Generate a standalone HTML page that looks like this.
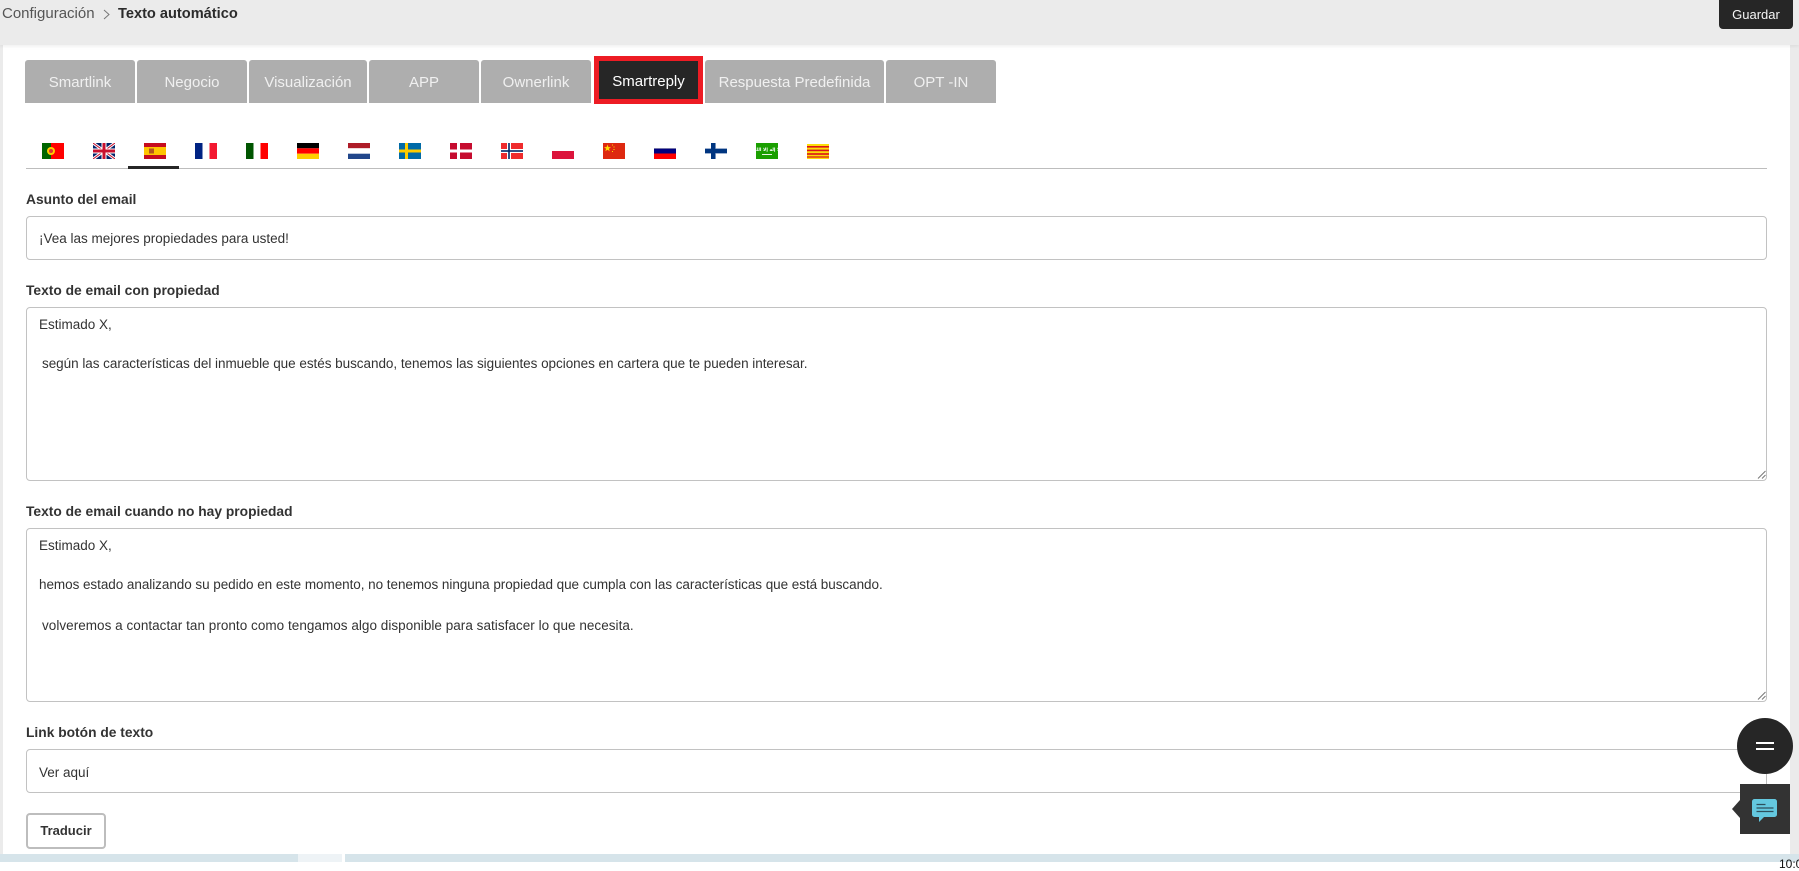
<!DOCTYPE html>
<html lang="es"><head><meta charset="utf-8"><title>Texto automático</title>
<style>
html,body{margin:0;padding:0;width:1799px;height:862px;overflow:hidden;background:#fff;font-family:"Liberation Sans",sans-serif;color:#333}
.a{position:absolute}
.t{position:absolute;white-space:pre;line-height:20px;height:20px;font-size:13.5px;color:#333}
.l{font-weight:bold;font-size:13.8px;color:#333}
.tab{position:absolute;top:60px;height:43px;line-height:46px;background:#aeaeae;color:#f0f0f0;text-align:center;font-size:15px;border-radius:3px 3px 0 0}
.box{position:absolute;left:26px;width:1739px;border:1px solid #c2c2c2;border-radius:4px;background:#fff}
svg.f{position:absolute;top:143px;width:22px;height:16px}
</style></head><body>
<div class="a" style="left:0;top:45px;width:3px;height:809px;background:#ebebeb"></div>
<div class="a" style="left:1790px;top:45px;width:9px;height:809px;background:#ebebeb"></div>
<div class="a" style="left:0;top:0;width:1799px;height:45px;background:#ebebeb;box-shadow:0 1px 4px rgba(0,0,0,.08)"></div>
<div class="t" style="left:2px;top:4px;font-size:15px;color:#555">Configuración</div>
<svg class="a" style="left:102px;top:9px" width="9" height="11" viewBox="0 0 9 11"><path d="M2 1l5 4.5L2 10" fill="none" stroke="#777" stroke-width="1"/></svg>
<div class="t" style="left:118px;top:4px;font-size:14.600px;font-weight:bold;color:#2b2b2b">Texto automático</div>
<div class="a" style="left:1719px;top:0;width:74px;height:29px;line-height:30px;background:#262626;border-radius:0 0 4px 4px;color:#f5f5f5;text-align:center;font-size:13px">Guardar</div>

<div class="tab" style="left:25px;width:110px">Smartlink</div>
<div class="tab" style="left:137px;width:110px">Negocio</div>
<div class="tab" style="left:249px;width:118px">Visualización</div>
<div class="tab" style="left:369px;width:110px">APP</div>
<div class="tab" style="left:481px;width:110px">Ownerlink</div>
<div class="tab" style="left:594px;top:56px;width:99px;height:38px;line-height:42px;border:5px solid #ed1c24;background:#262626;color:#fff;border-radius:0">Smartreply</div>
<div class="tab" style="left:705px;width:179px">Respuesta Predefinida</div>
<div class="tab" style="left:886px;width:110px">OPT -IN</div>

<svg class="f" style="left:42px" viewBox="0 0 22 16"><rect width="22" height="16" fill="#f00"/><rect width="9" height="16" fill="#060"/><circle cx="9" cy="8" r="4" fill="#fc0"/><circle cx="9" cy="8" r="2" fill="#d33"/></svg>
<svg class="f" style="left:93px" viewBox="0 0 22 16"><rect width="22" height="16" fill="#012169"/><path d="M0 0l22 16M22 0L0 16" stroke="#fff" stroke-width="3"/><path d="M0 0l22 16M22 0L0 16" stroke="#c8102e" stroke-width="1"/><path d="M11 0v16M0 8h22" stroke="#fff" stroke-width="5"/><path d="M11 0v16M0 8h22" stroke="#c8102e" stroke-width="3"/></svg>
<svg class="f" style="left:144px" viewBox="0 0 22 16"><rect width="22" height="16" fill="#c60b1e"/><rect y="4" width="22" height="8" fill="#ffc400"/><rect x="5" y="5.500" width="5" height="5" fill="#b5541c"/></svg>
<svg class="f" style="left:195px" viewBox="0 0 22 16"><rect width="22" height="16" fill="#fff"/><rect width="7.500" height="16" fill="#002383"/><rect x="14.500" width="7.500" height="16" fill="#f31830"/></svg>
<svg class="f" style="left:246px" viewBox="0 0 22 16"><rect width="22" height="16" fill="#fff"/><rect width="7.500" height="16" fill="#050"/><rect x="14.500" width="7.500" height="16" fill="#f00"/></svg>
<svg class="f" style="left:297px" viewBox="0 0 22 16"><rect width="22" height="5.300" fill="#000"/><rect y="5.300" width="22" height="5.400" fill="#f00"/><rect y="10.700" width="22" height="5.300" fill="#ffce00"/></svg>
<svg class="f" style="left:348px" viewBox="0 0 22 16"><rect width="22" height="5.300" fill="#ae1c28"/><rect y="5.300" width="22" height="5.400" fill="#fff"/><rect y="10.700" width="22" height="5.300" fill="#21468b"/></svg>
<svg class="f" style="left:399px" viewBox="0 0 22 16"><rect width="22" height="16" fill="#006aa7"/><rect x="6" width="3" height="16" fill="#fecc00"/><rect y="6.500" width="22" height="3" fill="#fecc00"/></svg>
<svg class="f" style="left:450px" viewBox="0 0 22 16"><rect width="22" height="16" fill="#c60c30"/><rect x="7" width="3" height="16" fill="#fff"/><rect y="6.500" width="22" height="3" fill="#fff"/></svg>
<svg class="f" style="left:501px" viewBox="0 0 22 16"><rect width="22" height="16" fill="#ef2b2d"/><rect x="6" width="4" height="16" fill="#fff"/><rect y="6" width="22" height="4" fill="#fff"/><rect x="7.200" width="1.600" height="16" fill="#002868"/><rect y="7.200" width="22" height="1.600" fill="#002868"/></svg>
<svg class="f" style="left:552px" viewBox="0 0 22 16"><rect y="8" width="22" height="8" fill="#dc143c"/></svg>
<svg class="f" style="left:603px" viewBox="0 0 22 16"><rect width="22" height="16" fill="#de2910"/><path d="M4.500 1.500l.9 2.600 2.600 0-2.100 1.600.8 2.600-2.200-1.600-2.200 1.600.8-2.600L1 4.100l2.600 0z" fill="#ffde00"/><g fill="#ffde00"><rect x="9" y="1.500" width="1" height="1"/><rect x="10.500" y="3.500" width="1" height="1"/><rect x="10.500" y="6" width="1" height="1"/><rect x="9" y="8" width="1" height="1"/></g></svg>
<svg class="f" style="left:654px" viewBox="0 0 22 16"><rect y="5" width="22" height="6" fill="#00007e"/><rect y="10.500" width="22" height="5.500" fill="#f00"/><rect y="5" width="22" height="1" fill="#7777aa"/></svg>
<svg class="f" style="left:705px" viewBox="0 0 22 16"><rect y="5" width="22" height="6" fill="#c5d0e3"/><rect x="6" width="5" height="16" fill="#c5d0e3"/><rect x="6" width="4.400" height="16" fill="#003580"/><rect y="5.800" width="22" height="4.400" fill="#003580"/></svg>
<svg class="f" style="left:756px" viewBox="0 0 22 16"><rect width="22" height="16" fill="#1a9f00"/><text x="11" y="8" text-anchor="middle" font-size="4.500" font-weight="bold" fill="#fff" font-family="DejaVu Sans,sans-serif">لا إله إلا الله</text><rect x="6" y="11" width="10" height="1" fill="#e8f5e0"/></svg>
<svg class="f" style="left:807px" viewBox="0 0 22 16"><rect y="1" width="22" height="15" fill="#fcdd09"/><rect y="3" width="22" height="1.600" fill="#da121a"/><rect y="6.600" width="22" height="1.600" fill="#da121a"/><rect y="10.200" width="22" height="1.600" fill="#da121a"/><rect y="13.400" width="22" height="1.200" fill="#da121a"/></svg>

<div class="a" style="left:26px;top:168px;width:1741px;height:1px;background:#bdbdbd"></div>
<div class="a" style="left:128px;top:166px;width:51px;height:3px;background:#262626"></div>

<div class="t l" style="left:26px;top:190px">Asunto del email</div>
<div class="box" style="top:216px;height:42px"></div>
<div class="t" style="left:39px;top:229px">¡Vea las mejores propiedades para usted!</div>

<div class="t l" style="left:26px;top:281px">Texto de email con propiedad</div>
<div class="box" style="top:307px;height:172px"></div>
<div class="t" style="left:39px;top:315px">Estimado X,</div>
<div class="t" style="left:42px;top:354px;letter-spacing:-.036px">según las características del inmueble que estés buscando, tenemos las siguientes opciones en cartera que te pueden interesar.</div>
<svg class="a" style="left:1757px;top:470px" width="9" height="9" viewBox="0 0 9 9"><path d="M8.500 1L1 8.500M8.500 5L5 8.500" stroke="#777" fill="none"/></svg>

<div class="t l" style="left:26px;top:502px">Texto de email cuando no hay propiedad</div>
<div class="box" style="top:528px;height:172px"></div>
<div class="t" style="left:39px;top:536px">Estimado X,</div>
<div class="t" style="left:39px;top:575px;letter-spacing:-.05px">hemos estado analizando su pedido en este momento, no tenemos ninguna propiedad que cumpla con las características que está buscando.</div>
<div class="t" style="left:42px;top:616px;letter-spacing:.035px">volveremos a contactar tan pronto como tengamos algo disponible para satisfacer lo que necesita.</div>
<svg class="a" style="left:1757px;top:691px" width="9" height="9" viewBox="0 0 9 9"><path d="M8.500 1L1 8.500M8.500 5L5 8.500" stroke="#777" fill="none"/></svg>

<div class="t l" style="left:26px;top:723px">Link botón de texto</div>
<div class="box" style="top:749px;height:42px"></div>
<div class="t" style="left:39px;top:763px">Ver aquí</div>

<div class="a" style="left:26px;top:813px;width:76px;height:32px;line-height:32px;border:2px solid #bdbdbd;border-radius:4px;background:#fff;text-align:center;font-size:13px;font-weight:bold;color:#333">Traducir</div>

<div class="a" style="left:0;top:854px;width:1799px;height:8px;background:#d6e4ea"></div>
<div class="a" style="left:298px;top:854px;width:44px;height:8px;background:#eef3f6"></div>
<div class="a" style="left:342px;top:854px;width:3px;height:8px;background:#fff"></div>
<div class="a" style="left:1779px;top:857px;font-size:12px;line-height:14px;color:#111;white-space:pre">10:0</div>

<div class="a" style="left:1737px;top:718px;width:56px;height:56px;border-radius:50%;background:#262626"></div>
<div class="a" style="left:1756px;top:742px;width:18px;height:2px;background:#fff"></div>
<div class="a" style="left:1756px;top:748px;width:18px;height:2px;background:#fff"></div>
<div class="a" style="left:1766px;top:774px;width:1px;height:10px;background:#bdbdbd"></div>
<div class="a" style="left:1740px;top:784px;width:50px;height:50px;background:#333"></div>
<svg class="a" style="left:1732px;top:800px" width="8" height="18" viewBox="0 0 8 18"><path d="M8 0v18L0 9z" fill="#333"/></svg>
<svg class="a" style="left:1752px;top:799px" width="26" height="24" viewBox="0 0 26 24"><path d="M2.500 0h20A2.500 2.500 0 0 1 25 2.500v13a2.500 2.500 0 0 1-2.500 2.500H12L7 23v-5H2.500A2.500 2.500 0 0 1 0 15.500v-13A2.500 2.500 0 0 1 2.500 0z" fill="#64c8df"/><path d="M4.500 5.500h9M4.500 9h17M4.500 12.500h17" stroke="#2d4f5c" stroke-width="1.200"/></svg>
</body></html>
